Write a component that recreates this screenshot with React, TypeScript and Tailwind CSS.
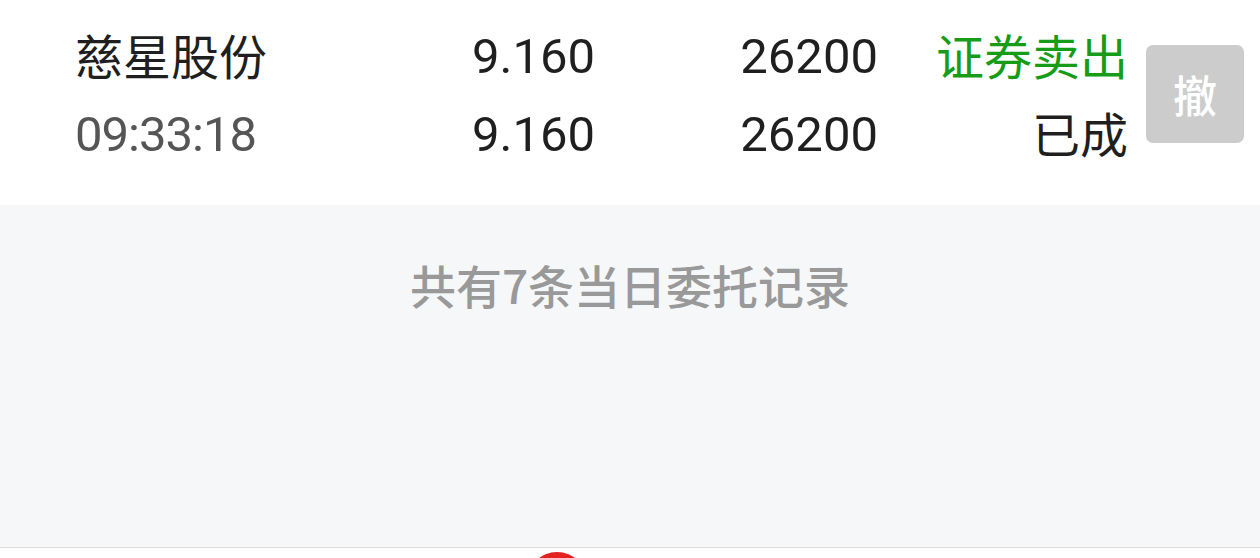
const num = "font-['Roboto','Noto_Sans_CJK_SC',sans-serif]";
const cjk = "font-['Noto_Sans_CJK_SC',sans-serif]";

export default function App() {
  return (
    <div className="w-[1260px] h-[558px] overflow-hidden bg-white flex flex-col">
      <div className="h-[205px] shrink-0 bg-white flex items-start pt-[17px] pl-[75px] pr-[16px]">
        <div className="flex-1 grid grid-cols-[300px_220px_283px_250px] grid-rows-[78px_78px] items-center">
          <div className={`${cjk} text-[48px] text-[#1f1f1f] leading-none -mt-[4px]`}>慈星股份</div>
          <div className={`${num} text-[49px] text-[#1f1f1f] leading-none text-right`}>9.160</div>
          <div className={`${num} text-[49px] text-[#1f1f1f] leading-none text-right`}>26200</div>
          <div className={`${cjk} text-[48px] text-[#179c17] leading-none text-right -mt-[4px]`}>证券卖出</div>
          <div className={`${num} text-[49px] text-[#555555] leading-none tracking-[-1px]`}>09:33:18</div>
          <div className={`${num} text-[49px] text-[#1f1f1f] leading-none text-right`}>9.160</div>
          <div className={`${num} text-[49px] text-[#1f1f1f] leading-none text-right`}>26200</div>
          <div className={`${cjk} text-[48px] text-[#1f1f1f] leading-none text-right -mt-[4px]`}>已成</div>
        </div>
        <button className={`${cjk} ml-[18px] mt-[28px] w-[98px] h-[98px] rounded-[7px] bg-[#cccccc] text-white text-[44px] font-medium flex items-center justify-center`}>
          撤
        </button>
      </div>
      <div className="flex-1 bg-[#f6f7f9] flex justify-center pt-[56px] border-b border-[#dddddd]">
        <div className={`${cjk} text-[46px] leading-none font-medium text-[#999999]`}>共有7条当日委托记录</div>
      </div>
      <div className="h-[10px] shrink-0 bg-white relative">
        <div className="absolute left-[527px] top-[4px] w-[60px] h-[60px] rounded-full bg-[#e52222]" />
      </div>
    </div>
  );
}
